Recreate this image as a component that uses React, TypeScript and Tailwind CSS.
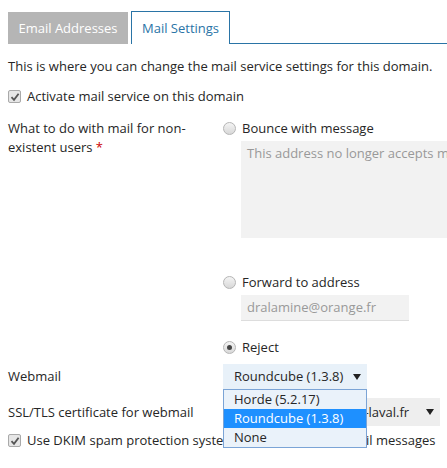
import React from "react";

function Check() {
  return (
    <span className="inline-flex h-[13px] w-[13px] shrink-0 items-center justify-center rounded-[2px] border border-[#a9a9a9] bg-[#e6e6e6]">
      <svg width="10" height="10" viewBox="0 0 10 10">
        <path d="M1.5 5.2 L4 7.8 L8.6 1.8" fill="none" stroke="#555" strokeWidth="1.8" />
      </svg>
    </span>
  );
}

function Radio({ on = false }: { on?: boolean }) {
  return (
    <span className="inline-flex h-[13px] w-[13px] shrink-0 items-center justify-center rounded-full border border-[#b5b5b5] bg-gradient-to-b from-[#f4f4f4] to-[#d8d8d8]">
      {on && <span className="h-[5px] w-[5px] rounded-full bg-[#444]" />}
    </span>
  );
}

function Arrow() {
  return (
    <svg width="8" height="6" viewBox="0 0 8 6">
      <path d="M0 0 H8 L4 6 Z" fill="#222" />
    </svg>
  );
}

const webmails = ["Horde (5.2.17)", "Roundcube (1.3.8)", "None"];

export default function App() {
  return (
    <div
      className="h-[468px] w-[447px] overflow-hidden bg-white text-[13px] leading-[19px] text-[#262626]"
      style={{ fontFamily: '"Open Sans", sans-serif' }}
    >
      {/* tabs */}
      <div className="flex items-end pt-[11px] pl-2">
        <div className="flex h-[32px] w-[120px] items-center justify-center bg-[#b5b5b5] text-white">Email Addresses</div>
        <div className="ml-[3px] flex h-[33px] w-[99px] items-center justify-center border border-b-0 border-[#2a74a6] bg-white text-[#2a74a6]">
          Mail Settings
        </div>
        <div className="flex-1 border-b border-[#2a74a6]" />
      </div>

      <div className="px-2">
        <p className="mt-[13px]">This is where you can change the mail service settings for this domain.</p>

        <label className="mt-[11px] flex items-center gap-[6px]">
          <Check />
          <span>Activate mail service on this domain</span>
        </label>

        <div className="mt-[13px] grid grid-cols-[215px_1fr]">
          <div className="pr-4">
            What to do with mail for non-existent users <span className="text-[#c00]">*</span>
          </div>
          <div>
            <div className="flex items-center gap-[6px]">
              <Radio />
              <span>Bounce with message</span>
            </div>
            <div className="ml-[18px] mt-[3px] h-[97px] w-[240px] bg-[#f2f2f2] px-[6px] py-[3px] whitespace-nowrap text-[#999]">
              This address no longer accepts mail.
            </div>

            <div className="mt-[35px] flex items-center gap-[6px]">
              <Radio />
              <span>Forward to address</span>
            </div>
            <div className="ml-[18px] mt-[3px] flex h-[26px] w-[168px] items-center border-b border-[#ddd] bg-[#f2f2f2] px-[6px] text-[#999]">
              dralamine@orange.fr
            </div>

            <div className="mt-[17px] flex items-center gap-[6px]">
              <Radio on />
              <span>Reject</span>
            </div>
          </div>
        </div>

        <div className="mt-[7px] grid grid-cols-[215px_1fr] items-center">
          <div>Webmail</div>
          <div className="relative">
            <div className="flex h-[25px] w-[144px] items-center justify-between bg-[#e8f1f9] pl-[11px] pr-[6px]">
              <span>Roundcube (1.3.8)</span>
              <Arrow />
            </div>
            <div className="absolute left-0 top-[25px] z-10 w-[144px] border border-[#7ba4d6] bg-[#eaf2fa]">
              {webmails.map((w) => (
                <div
                  key={w}
                  className={`h-[19px] pl-[10px] ${w === "Roundcube (1.3.8)" ? "bg-[#1e90ff] text-white" : ""}`}
                >
                  {w}
                </div>
              ))}
            </div>
          </div>
        </div>

        <div className="mt-[9px] grid grid-cols-[215px_1fr] items-center">
          <div>SSL/TLS certificate for webmail</div>
          <div className="flex h-[28px] w-[217px] items-center justify-between bg-[#eeeeee] pl-[11px] pr-[6px]">
            <span className="whitespace-nowrap">Lets Encrypt mail.ville-laval.fr</span>
            <Arrow />
          </div>
        </div>

        <label className="mt-[5px] flex items-center gap-[6px] whitespace-nowrap">
          <Check />
          <span>Use DKIM spam protection system to sign outgoing email messages</span>
        </label>
      </div>
    </div>
  );
}
